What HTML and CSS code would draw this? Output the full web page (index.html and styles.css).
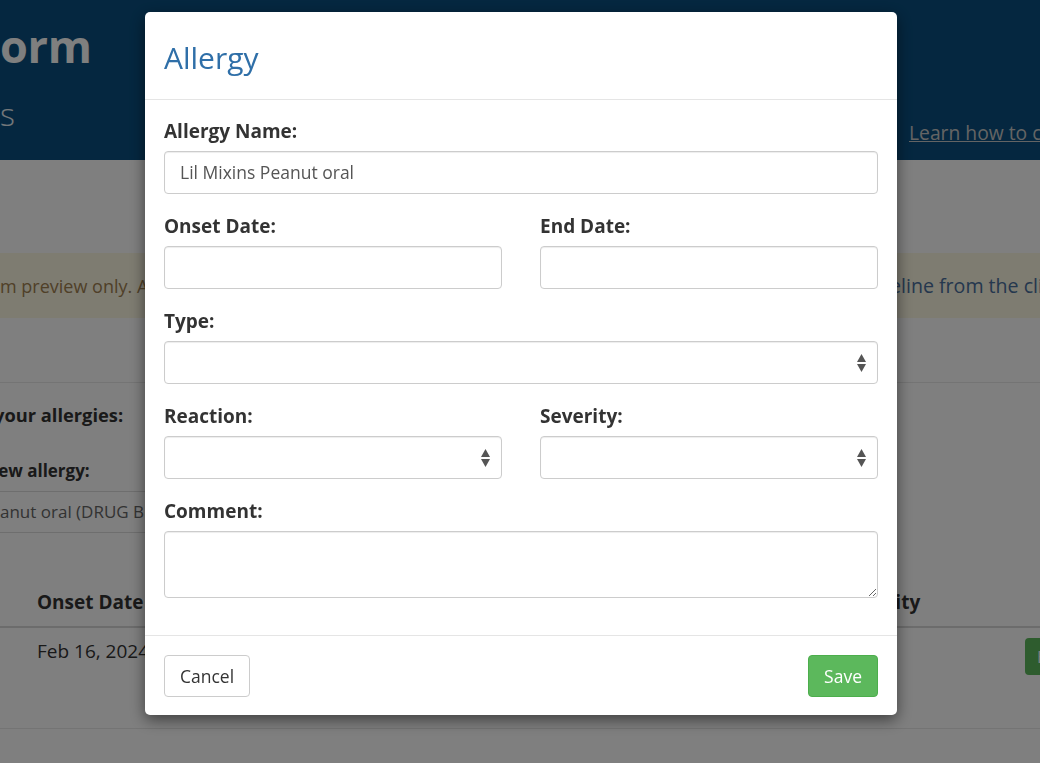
FILE: index.html
```html
<!DOCTYPE html>
<html lang="en">
<head>
<meta charset="utf-8">
<title>Allergy</title>
<link rel="stylesheet" href="styles.css">
</head>
<body>
<div class="page">
  <header class="site-header">
    <div class="brand">orm</div>
    <div class="header-row">
      <div class="tagline">s</div>
      <a class="learn" href="#">Learn how to create a form</a>
    </div>
  </header>

  <div class="alert">
    <span class="alert-text">m preview only. All changes are discarded.</span>
    <a class="alert-link" href="#">eline from the clinic</a>
  </div>

  <section class="allergies">
    <h3 class="section-title">your allergies:</h3>
    <div class="new-label">new allergy:</div>
    <div class="suggestion">anut oral (DRUG BRAND)</div>
  </section>

  <div class="list">
    <div class="list-head">
      <div class="cell-date">Onset Date</div>
      <div class="cell-sev">Severity</div>
    </div>
    <div class="list-row">
      <div class="cell-date">Feb 16, 2024</div>
      <div class="cell-actions"><span class="btn-edit">Edit</span></div>
    </div>
  </div>
</div>

<div class="backdrop">
  <div class="modal">
    <div class="modal-header">
      <h3 class="modal-title">Allergy</h3>
    </div>
    <div class="modal-body">
      <div class="form-group">
        <label class="label">Allergy Name:</label>
        <div class="control">Lil Mixins Peanut oral</div>
      </div>
      <div class="form-row">
        <div class="form-group">
          <label class="label">Onset Date:</label>
          <div class="control"></div>
        </div>
        <div class="form-group">
          <label class="label">End Date:</label>
          <div class="control"></div>
        </div>
      </div>
      <div class="form-group">
        <label class="label">Type:</label>
        <div class="control select">
          <svg class="arrows" width="9" height="18" viewBox="0 0 9 18"><path d="M4.5 0 L9 8 L0 8 Z M0 10 L9 10 L4.5 18 Z" fill="#555"/></svg>
        </div>
      </div>
      <div class="form-row">
        <div class="form-group">
          <label class="label">Reaction:</label>
          <div class="control select">
            <svg class="arrows" width="9" height="18" viewBox="0 0 9 18"><path d="M4.5 0 L9 8 L0 8 Z M0 10 L9 10 L4.5 18 Z" fill="#555"/></svg>
          </div>
        </div>
        <div class="form-group">
          <label class="label">Severity:</label>
          <div class="control select">
            <svg class="arrows" width="9" height="18" viewBox="0 0 9 18"><path d="M4.5 0 L9 8 L0 8 Z M0 10 L9 10 L4.5 18 Z" fill="#555"/></svg>
          </div>
        </div>
      </div>
      <div class="form-group">
        <label class="label">Comment:</label>
        <textarea class="textarea"></textarea>
      </div>
    </div>
    <div class="modal-footer">
      <button class="btn btn-default">Cancel</button>
      <button class="btn btn-success">Save</button>
    </div>
  </div>
</div>
</body>
</html>
```
FILE: styles.css
```css
html, body {
  margin: 0;
  padding: 0;
}
body {
  font-family: "Open Sans", "Noto Sans", sans-serif;
  color: #333;
  background: #fff;
  height: 763px;
  overflow: hidden;
}
.page {
  width: 1040px;
}
.site-header {
  height: 160px;
  background: #0a4f80;
  overflow: hidden;
}
.brand {
  font-size: 45px;
  font-weight: 700;
  line-height: 56px;
  padding-top: 18px;
  color: #fff;
  letter-spacing: -0.3px;
}
.header-row {
  display: grid;
  grid-template-columns: 909px 1fr;
  align-items: start;
  margin-top: 20px;
}
.tagline {
  font-size: 32px;
  font-weight: 300;
  line-height: 40px;
  color: #e8eef4;
}
.learn {
  font-size: 19.3px;
  line-height: 24px;
  color: #c9c9c9;
  text-decoration: underline;
  white-space: nowrap;
  overflow: hidden;
  margin-top: 27px;
}
.alert {
  margin-top: 93px;
  height: 65px;
  background: #fcf8e3;
  display: grid;
  grid-template-columns: 890px 1fr;
  align-items: center;
  font-size: 18px;
  white-space: nowrap;
  overflow: hidden;
}
.alert-text {
  color: #a08050;
}
.alert-link {
  color: #4a6f9c;
  font-size: 19.6px;
  text-decoration: none;
}
.allergies {
  margin-top: 64px;
  border-top: 1px solid #e8e8e8;
  padding-top: 20px;
}
.section-title {
  margin: 0 0 0 -6px;
  font-size: 18.3px;
  line-height: 24px;
  font-weight: 700;
  color: #333;
}
.new-label {
  margin-top: 32px;
  margin-left: -13px;
  font-size: 17px;
  line-height: 24px;
  font-weight: 700;
  color: #333;
  width: 600px;
  padding-bottom: 8px;
  border-bottom: 1px solid #dcdcdc;
}
.suggestion {
  width: 600px;
  font-size: 17px;
  line-height: 40px;
  color: #666;
  border-bottom: 1px solid #dcdcdc;
}
.list {
  margin-top: 45px;
}
.list-head {
  display: flex;
  padding: 12px 0;
  border-bottom: 2px solid #d8d8d8;
  font-size: 19px;
  line-height: 24px;
  font-weight: 700;
  color: #333;
}
.list-head .cell-date {
  flex: 0 0 843px;
  padding-left: 37px;
  box-sizing: border-box;
}
.list-row {
  display: flex;
  height: 100px;
  border-bottom: 1px solid #e8e8e8;
  font-size: 19px;
  line-height: 24px;
  color: #333;
}
.list-row .cell-date {
  flex: 0 0 1025px;
  padding: 11px 0 0 37px;
  box-sizing: border-box;
}
.cell-actions {
  padding-top: 10px;
}
.btn-edit {
  display: block;
  width: 50px;
  height: 37px;
  background: #5cb85c;
  border-radius: 4px;
  color: #fff;
  font-size: 17px;
  line-height: 37px;
  padding-left: 12px;
}

/* Modal */
.backdrop {
  position: fixed;
  inset: 0;
  background: rgba(0, 0, 0, 0.5);
}
.modal {
  width: 752px;
  margin: 12px 0 0 145px;
  background: #fff;
  border-radius: 5px;
  box-shadow: 0 5px 15px rgba(0, 0, 0, 0.5);
}
.modal-header {
  padding: 20px 19px 16px;
  border-bottom: 1px solid #e5e5e5;
}
.modal-title {
  margin: 0;
  font-size: 30px;
  line-height: 51px;
  font-weight: 400;
  color: #2f6fa8;
}
.modal-body {
  padding: 20px 19px 16px;
}
.form-row {
  display: grid;
  grid-template-columns: 1fr 1fr;
  column-gap: 38px;
}
.form-group {
  margin-bottom: 21px;
}
.label {
  display: block;
  font-size: 19px;
  line-height: 22px;
  font-weight: 700;
  color: #333;
  margin-bottom: 9px;
}
.control {
  box-sizing: border-box;
  height: 43px;
  border: 1px solid #ccc;
  border-radius: 4px;
  box-shadow: inset 0 1px 1px rgba(0, 0, 0, 0.075);
  padding: 0 15px;
  font-size: 17.5px;
  line-height: 41px;
  color: #555;
  background: #fff;
}
.select {
  display: flex;
  align-items: center;
  justify-content: flex-end;
  padding-right: 11px;
}
.arrows {
  display: block;
}
.textarea {
  display: block;
  box-sizing: border-box;
  width: 100%;
  height: 67px;
  margin: 0;
  border: 1px solid #ccc;
  border-radius: 4px;
  box-shadow: inset 0 1px 1px rgba(0, 0, 0, 0.075);
  resize: vertical;
  font-family: inherit;
  font-size: 17px;
}
.modal-footer {
  border-top: 1px solid #e5e5e5;
  padding: 19px 19px 18px;
  display: flex;
  justify-content: space-between;
}
.btn {
  height: 42px;
  border-radius: 4px;
  font-family: "Open Sans", "Noto Sans", sans-serif;
  font-size: 17.5px;
  padding: 0 15px;
  margin: 0;
  cursor: pointer;
}
.btn-default {
  background: #fff;
  border: 1px solid #ccc;
  color: #333;
}
.btn-success {
  background: #5cb85c;
  border: 1px solid #4cae4c;
  color: #fff;
}
```
